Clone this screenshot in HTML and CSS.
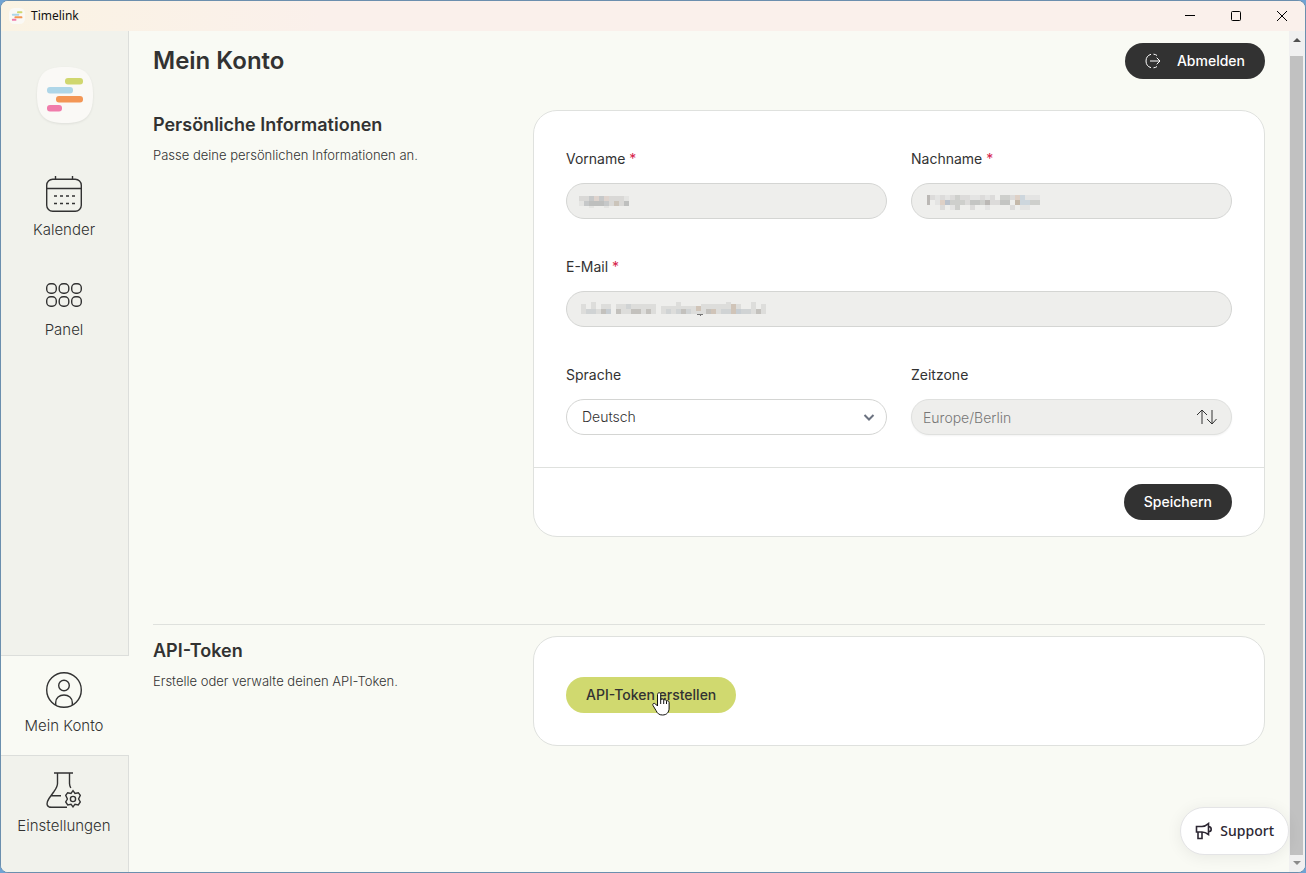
FILE: index.html
```html
<!DOCTYPE html>
<html lang="de">
<head>
<meta charset="utf-8">
<title>Timelink</title>
<meta name="viewport" content="width=device-width, initial-scale=1">
<link rel="stylesheet" href="styles.css">
</head>
<body>
<div class="window">
  <header class="titlebar">
    <svg class="titlebar-logo" viewBox="0 0 56 56" aria-hidden="true">
      <rect width="56" height="56" rx="18" fill="#faf9f5"/>
      <rect x="28" y="11" width="19" height="7" rx="3" fill="#d0d76f"/>
      <rect x="10" y="20" width="26" height="7" rx="3" fill="#aed6e8"/>
      <rect x="19" y="29" width="28" height="7" rx="3" fill="#f39655"/>
      <rect x="10" y="38" width="16" height="7" rx="3" fill="#f07cab"/>
    </svg>
    <span class="titlebar-name">Timelink</span>
    <div class="window-controls">
      <button type="button" aria-label="Minimieren"><svg viewBox="0 0 12 12"><path d="M1 5.500h10"/></svg></button>
      <button type="button" aria-label="Maximieren"><svg viewBox="0 0 12 12"><rect x="1.500" y="1.500" width="9" height="9" rx="1"/></svg></button>
      <button type="button" aria-label="Schließen"><svg viewBox="0 0 12 12"><path d="M1 1l10 10M11 1L1 11"/></svg></button>
    </div>
  </header>

  <div class="body">
    <nav class="sidebar">
      <svg class="logo" viewBox="0 0 56 56" role="img" aria-label="Timelink">
        <path d="M28 0C47 0 56 6 56 28S47 56 28 56 0 50 0 28 9 0 28 0z" fill="#faf9f6"/>
        <rect x="28" y="11" width="18" height="6.500" rx="3" fill="#d0d76f"/>
        <rect x="10" y="20" width="26" height="6.500" rx="3" fill="#aed6e8"/>
        <rect x="19" y="29" width="27" height="6.500" rx="3" fill="#f39655"/>
        <rect x="10" y="38" width="15" height="6.500" rx="3" fill="#f07cab"/>
      </svg>
      <a class="nav-item" href="#kalender">
        <svg viewBox="0 0 36 36"><rect x=".7" y="3.200" width="34.600" height="32" rx="6"/><path d="M1 12.500h34M9.500 0v3M26.500 0v3"/><path d="M8 20h21M8 27.500h21" stroke-dasharray="3 3"/></svg>
        <span>Kalender</span>
      </a>
      <a class="nav-item" href="#panel">
        <svg viewBox="0 0 36 36"><rect x=".7" y="7.700" width="9.600" height="9.600" rx="4"/><rect x="13.200" y="7.700" width="9.600" height="9.600" rx="4"/><rect x="25.700" y="7.700" width="9.600" height="9.600" rx="4"/><rect x=".7" y="20.700" width="9.600" height="9.600" rx="4"/><rect x="13.200" y="20.700" width="9.600" height="9.600" rx="4"/><rect x="25.700" y="20.700" width="9.600" height="9.600" rx="4"/></svg>
        <span>Panel</span>
      </a>
      <div class="spacer"></div>
      <a class="nav-item active" href="#konto" aria-current="page">
        <svg viewBox="0 0 36 36"><circle cx="18" cy="18" r="17.300"/><circle cx="18" cy="13.500" r="5.300"/><path d="M9.700 33v-2.500C9.700 26 13.400 23 18 23s8.300 3 8.300 7.500V33"/></svg>
        <span>Mein Konto</span>
      </a>
      <a class="nav-item" href="#einstellungen">
        <svg viewBox="0 0 36 36"><path d="M8 1h19M11.500 1v10.500c0 3-1.500 5-3.500 8L3 26.500C-.5 32 1 35.300 5.500 35.300H21M23.500 1v10.500c0 2 .5 3 1.300 4.500M4.500 23.700H15"/><path d="M27 18.700l2 2.800 3.300-.8 2 2.700-1.700 3.600 1.700 2.900-2 3-3.300-.7-2 2.700-2-2.700-3.300.7-2-3 1.700-2.900-1.700-3.600 2-2.700 3.300.8z"/><circle cx="27" cy="27" r="2.600"/></svg>
        <span>Einstellungen</span>
      </a>
    </nav>

    <main class="content">
      <div class="page-head">
        <h1>Mein Konto</h1>
        <button type="button" class="btn btn-dark btn-icon">
          <svg viewBox="0 0 16 16" aria-hidden="true"><path d="M6 1.300A7 7 0 0 0 6 14.700M8.500 1.200Q10.500 1.300 12 2.500M8.500 14.800Q10.500 14.700 12 13.500M5 8h10M11.700 4.700L15 8l-3.300 3.300"/></svg>
          Abmelden
        </button>
      </div>

      <section class="section">
        <div class="section-text">
          <h2>Persönliche Informationen</h2>
          <p>Passe deine persönlichen Informationen an.</p>
        </div>
        <form class="card">
          <div class="fields">
            <div class="field">
              <label for="vorname">Vorname <span class="required">*</span></label>
              <div class="control">
                <input id="vorname" type="text" disabled>
                <svg class="mosaic" width="52" height="15" viewBox="0 0 52 15" aria-hidden="true">
                  <path fill="#d9d8d6" d="M0 3h5v5h-5zM5 3h5v5h-5zM35 3h10v5h-10zM30 3h5v10h-5zM40 8h5v5h-5z"/><path fill="#e4e4e2" d="M0 8h5v5h-5zM45 3h5v5h-5zM10 13h5v2h-5zM25 13h5v2h-5z"/><path fill="#c6c8c9" d="M10 3h5v5h-5zM20 3h5v5h-5zM5 8h5v5h-5zM25 8h5v5h-5z"/><path fill="#ded3cd" d="M15 3h5v5h-5zM25 3h5v5h-5z"/><path fill="#bebfbe" d="M10 8h15v5h-15zM45 8h5v5h-5z"/><path fill="#cbc4ba" d="M35 8h5v5h-5z"/>
                </svg>
              </div>
            </div>
            <div class="field">
              <label for="nachname">Nachname <span class="required">*</span></label>
              <div class="control">
                <input id="nachname" type="text" disabled>
                <svg class="mosaic inset" width="114" height="15" viewBox="0 0 114 15" aria-hidden="true">
                  <path fill="#dcdbda" d="M3 0h5v5h-5zM13 0h5v5h-5zM23 0h5v5h-5zM33 0h10v5h-10zM53 0h5v5h-5zM63 0h5v5h-5zM83 0h10v5h-10zM13 10h5v5h-5zM43 10h5v5h-5zM83 10h5v5h-5zM63 5h10v5h-10zM38 5h5v5h-5z"/><path fill="#e4e4e3" d="M8 0h5v10h-5zM18 0h5v5h-5zM43 0h10v5h-10zM58 0h5v5h-5zM98 0h15v5h-15zM23 10h10v5h-10zM58 10h5v5h-5zM93 10h10v5h-10z"/><path fill="#bbb8b5" d="M0 0h3v10h-3zM58 5h5v5h-5z"/><path fill="#ded0c6" d="M13 5h5v5h-5zM88 0h5v5h-5z"/><path fill="#bbc2cc" d="M18 5h5v5h-5z"/><path fill="#cecfcc" d="M23 5h15v5h-15zM28 0h5v15h-5zM53 5h5v5h-5zM103 5h10v5h-10zM73 0h10v5h-10z"/><path fill="#c4c5c3" d="M43 5h10v5h-10zM73 5h10v5h-10z"/><path fill="#c5b9aa" d="M88 5h5v5h-5z"/><path fill="#cdd6dd" d="M93 0h5v10h-5zM98 5h5v5h-5z"/>
                </svg>
              </div>
            </div>
            <div class="field wide">
              <label for="email">E-Mail <span class="required">*</span></label>
              <div class="control">
                <input id="email" type="email" disabled>
                <svg class="mosaic" width="188" height="15" viewBox="0 0 188 15" aria-hidden="true">
                  <path fill="#dddddb" d="M2 3h5v10h-5zM7 8h25v5h-25zM12 1h5v7h-5zM22 3h10v5h-10zM37 3h40v10h-40zM82 5h40v8h-40zM97 1h5v7h-5zM122 3h25v10h-25zM147 1h5v12h-5zM157 3h5v10h-5zM162 8h25v5h-25zM172 1h5v7h-5zM182 3h5v10h-5z"/><path fill="#d0d3d4" d="M7 8h10v5h-10zM47 3h5v5h-5zM97 8h5v5h-5zM107 8h5v5h-5zM142 8h10v5h-10zM162 8h10v5h-10zM87 8h5v5h-5z"/><path fill="#c3c1bd" d="M22 8h5v5h-5zM37 8h5v5h-5zM52 8h10v5h-10zM67 8h5v5h-5zM102 8h5v5h-5zM127 8h5v5h-5zM177 8h5v5h-5z"/><path fill="#d0c4b8" d="M152 3h5v10h-5zM117 5h5v5h-5zM132 8h5v5h-5z"/><path fill="#c7cdd2" d="M27 8h5v5h-5zM157 8h5v5h-5z"/><path d="M118 13q4 2 6 0" fill="none" stroke="#777"/>
                </svg>
              </div>
            </div>
            <div class="field">
              <label for="sprache">Sprache</label>
              <div class="control">
                <select id="sprache"><option>Deutsch</option></select>
                <svg class="chevron" viewBox="0 0 12 12" aria-hidden="true"><path d="M1.500 4L6 8.500 10.500 4"/></svg>
              </div>
            </div>
            <div class="field">
              <label for="zeitzone">Zeitzone</label>
              <div class="control">
                <input class="timezone" id="zeitzone" type="text" value="Europe/Berlin" disabled>
                <svg class="sort" viewBox="0 0 20 16" aria-hidden="true"><path d="M5.500 15V1.500M.5 6l5-5 5 5M15.500 1v13.500M10.500 10l5 5 4.500-5"/></svg>
              </div>
            </div>
          </div>
          <div class="card-foot"><button type="button" class="btn btn-dark">Speichern</button></div>
        </form>
      </section>

      <section class="section ruled">
        <div class="section-text">
          <h2>API-Token</h2>
          <p>Erstelle oder verwalte deinen API-Token.</p>
        </div>
        <div class="card token-card">
          <button type="button" class="btn btn-lime">API-Token erstellen
            <svg class="pointer" viewBox="0 0 18 24" aria-hidden="true"><path d="M5.500 14V2.500C5.500.2 8.700.2 8.700 2.500V8c.5-1.500 3-1.300 3 .5.6-1.300 2.800-1 2.800.7.8-.9 2.600-.5 2.600 1.300V16c0 4.500-2.500 7-6.600 7-3.500 0-5-1.500-6.500-4.500L1 13.500C0 11.500 2.200 10.700 3.500 12z" fill="#fff" stroke="#111"/><path d="M8.700 8v4M11.700 8.500V12M14.500 9.200V12" stroke="#111" fill="none"/></svg>
          </button>
        </div>
      </section>
    </main>

    <div class="scrollbar" aria-hidden="true">
      <svg viewBox="0 0 8 4"><path d="M0 4L4 0l4 4z" fill="#505050"/></svg>
      <div class="thumb"></div>
      <svg viewBox="0 0 8 4"><path d="M0 0l4 4 4-4z" fill="#8b8b8b"/></svg>
    </div>
  </div>

  <button type="button" class="support">
    <svg viewBox="0 0 18 18" aria-hidden="true"><path d="M1.500 4.500H7c3 0 4.500-1.300 6.500-3v11c-2-1.500-3.500-2.500-6.500-2.500H1.500zM3 10v6.500h4V10M13.500 4.500c1.700 0 2.700 1.200 2.700 2.700s-1 2.500-2.700 2.500"/></svg>
    Support
  </button>
</div>
</body>
</html>
```
FILE: styles.css
```css
* { box-sizing: border-box; }

body {
  margin: 0;
  background: #6fa3d4;
  color: #323232;
  font-family: Inter, "Liberation Sans", sans-serif;
  font-size: 14px;
  line-height: 20px;
}

h1, h2, p { margin: 0; }

button, input, select { font: inherit; color: inherit; }

.window {
  position: relative;
  display: flex;
  flex-direction: column;
  min-height: 100vh;
  border: 1px solid #6b8fae;
  border-radius: 8px;
  background: #f9faf4;
  overflow: hidden;
}

.titlebar {
  display: flex;
  align-items: center;
  height: 30px;
  padding-left: 8px;
  background: linear-gradient(90deg, #faf3e3 0, #faf0eb 320px);
  color: #111;
}

.titlebar-logo { width: 16px; height: 16px; margin-right: 6px; }

.titlebar-name { font-family: "Noto Sans", sans-serif; font-size: 12px; }

.window-controls { display: flex; margin-left: auto; }

.window-controls button {
  display: grid;
  place-items: center;
  width: 46px;
  height: 28px;
  padding: 0;
  border: 0;
  background: none;
}

.window-controls svg { width: 12px; height: 12px; fill: none; stroke: #000; }

.body { display: flex; flex: 1; }

.sidebar {
  display: flex;
  flex-direction: column;
  width: 128px;
  padding-bottom: 16px;
  background: linear-gradient(#dcdedb, #dcdedb) right / 1px 100% no-repeat #f1f2ec;
}

.logo {
  align-self: center;
  width: 56px;
  height: 56px;
  margin: 36px 0 37px;
  filter: drop-shadow(0 1px 1px #00000014);
}

.nav-item {
  display: flex;
  flex-direction: column;
  align-items: center;
  gap: 6px;
  height: 100px;
  padding: 16px 2px 0 0;
  color: #323232;
  font-size: 15px;
  font-weight: 300;
  line-height: 24px;
  text-decoration: none;
}

.nav-item svg {
  width: 36px;
  height: 36px;
  fill: none;
  stroke: #323232;
  stroke-width: 1.4;
}

.nav-item.active {
  height: 101px;
  border: solid #dcdedb;
  border-width: 1px 0;
  background: #f9faf4;
}

.spacer { flex: 1; }

.content { flex: 1; min-width: 0; padding: 12px 24px 24px; }

.page-head {
  display: flex;
  align-items: center;
  justify-content: space-between;
  margin-bottom: 31px;
}

h1 { font-size: 24px; font-weight: 600; line-height: 36px; }

h2 { font-size: 18px; font-weight: 600; line-height: 30px; }

.section-text p { font-size: 13px; font-weight: 300; line-height: 30px; }

.section {
  display: grid;
  grid-template-columns: minmax(0, 1fr) minmax(0, 2fr);
  align-items: start;
  gap: 14px;
}

.section.ruled { margin-top: 87px; padding-top: 11px; border-top: 1px solid #dfe1dd; }

.card { border: 1px solid #dfe1de; border-radius: 24px; background: #fff; }

.token-card { padding: 40px 32px 32px; }

.fields {
  display: grid;
  grid-template-columns: repeat(2, minmax(0, 1fr));
  gap: 32px 24px;
  padding: 32px;
}

.field.wide { grid-column: 1 / -1; }

.field label { display: block; margin-bottom: 8px; line-height: 32px; }

.required { color: #d6234a; }

.control { position: relative; }

.control input, .control select {
  display: block;
  width: 100%;
  height: 36px;
  padding: 0 15px;
  border: 1px solid #d4d5d3;
  border-radius: 18px;
  background: #eeeeec;
  font-weight: 300;
  appearance: none;
}

.control select { background: #fff; color: #323232; }

.control .timezone { padding: 0 11px; border-color: #dfe0de; color: #777; box-shadow: 0 1px 2px #0000000d; }

.mosaic { position: absolute; top: 10px; left: 13px; shape-rendering: crispEdges; }

.mosaic.inset { top: 12px; left: 16px; }

.chevron, .sort { position: absolute; fill: none; pointer-events: none; }

.chevron { top: 12px; right: 12px; width: 12px; height: 12px; stroke: #6b7280; stroke-width: 2; }

.sort { top: 10px; right: 15px; width: 21px; height: 16px; stroke: #323232; }

.card-foot {
  display: flex;
  justify-content: flex-end;
  padding: 16px 32px;
  border-top: 1px solid #dfe1de;
}

.btn {
  position: relative;
  display: inline-flex;
  align-items: center;
  height: 36px;
  padding: 0 20px;
  border: 0;
  border-radius: 18px;
  font-weight: 500;
  white-space: nowrap;
}

.btn-dark { background: #323232; color: #fff; }

.btn-lime { display: flex; background: #d0d96f; }

.btn-icon { gap: 16px; }

.btn-icon svg { width: 16px; height: 16px; fill: none; stroke: #fff; }

.pointer { position: absolute; top: 15px; left: 86px; width: 18px; height: 24px; }

.scrollbar {
  display: flex;
  flex-direction: column;
  align-items: center;
  width: 16px;
  padding: 7px 1px 7px 0;
  background: #f0f0f0;
}

.scrollbar svg { width: 8px; height: 4px; }

.thumb { flex: 1; width: 13px; margin: 14px 0 6px; background: #c1c1c1; }

.support {
  position: absolute;
  right: 16px;
  bottom: 17px;
  display: flex;
  align-items: center;
  gap: 7px;
  height: 48px;
  padding: 0 14px;
  border: 1px solid #e4e4e6;
  border-radius: 24px;
  background: #fff;
  color: #2c2733;
  box-shadow: 0 2px 16px #00000012;
  font-family: "Noto Sans", sans-serif;
  font-weight: 500;
}

.support svg { width: 18px; height: 18px; fill: none; stroke: #2c2733; stroke-width: 1.6; }
```
